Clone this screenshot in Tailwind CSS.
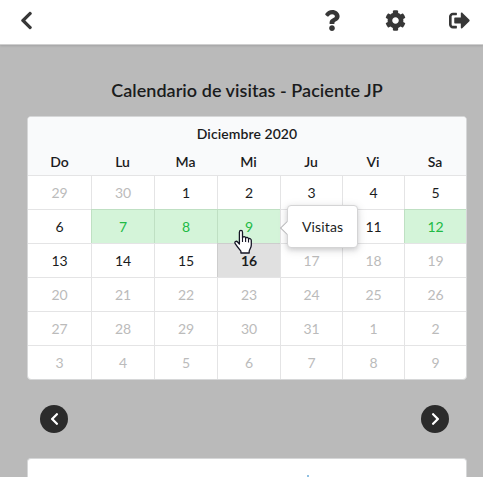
<!DOCTYPE html>
<html lang="es">
<head>
<meta charset="utf-8">
<title>Calendario de visitas</title>
<script src="https://cdn.jsdelivr.net/npm/@tailwindcss/browser@4"></script>
</head>
<body class="relative h-[477px] w-[483px] overflow-hidden bg-[#bababa] font-['Lato',sans-serif] text-[14px] text-[#1b1c1d]">
<header class="flex h-[45px] items-start justify-between border-b border-[#cfcfcf] bg-white pt-[9.5px] pr-[13px] pl-[20px] text-[#373737] shadow-[0_1px_2px_rgba(34,36,38,0.15)]">
  <svg class="h-[21px] w-[13px]" viewBox="0 0 320 512" fill="currentColor"><path d="M34.52 239.03L228.87 44.69c9.37-9.37 24.57-9.37 33.94 0l22.67 22.67c9.36 9.36 9.37 24.52.04 33.9L131.49 256l154.02 154.75c9.34 9.38 9.32 24.54-.04 33.9l-22.67 22.67c-9.37 9.37-24.57 9.37-33.94 0L34.52 272.97c-9.37-9.37-9.37-24.57 0-33.94z"/></svg>
  <div class="flex gap-[43px]">
    <svg class="mr-[2px] h-[21px] w-[16px]" viewBox="0 0 384 512" fill="currentColor"><path d="M202.021 0C122.202 0 70.503 32.703 29.914 91.026c-7.363 10.58-5.093 25.086 5.178 32.874l43.138 32.709c10.373 7.865 25.132 6.026 33.253-4.148 25.049-31.381 43.63-49.449 82.757-49.449 30.764 0 68.816 19.799 68.816 49.631 0 22.552-18.617 34.134-48.993 51.164-35.423 19.86-82.299 44.576-82.299 106.405V320c0 13.255 10.745 24 24 24h72.471c13.255 0 24-10.745 24-24v-5.773c0-42.86 125.268-44.645 125.268-160.627C377.504 66.256 286.902 0 202.021 0zM192 373.459c-38.196 0-69.271 31.075-69.271 69.271 0 38.195 31.075 69.27 69.271 69.27s69.271-31.075 69.271-69.271-31.075-69.27-69.271-69.27z"/></svg>
    <svg class="h-[21px] w-[21px]" viewBox="0 0 512 512" fill="currentColor"><path d="M487.4 315.7l-42.6-24.6c4.3-23.2 4.3-47 0-70.2l42.6-24.6c4.9-2.8 7.1-8.6 5.5-14-11.1-35.6-30-67.8-54.7-94.6-3.8-4.1-10-5.1-14.8-2.3L380.8 110c-17.9-15.4-38.5-27.3-60.8-35.1V25.8c0-5.6-3.9-10.5-9.4-11.7-36.7-8.2-74.3-7.8-109.2 0-5.5 1.2-9.4 6.1-9.4 11.7V75c-22.2 7.9-42.8 19.8-60.8 35.1L88.7 85.5c-4.9-2.8-11-1.9-14.8 2.3-24.7 26.7-43.6 58.9-54.7 94.6-1.7 5.4.6 11.2 5.5 14L67.3 221c-4.3 23.2-4.3 47 0 70.2l-42.6 24.6c-4.9 2.8-7.1 8.6-5.5 14 11.1 35.6 30 67.8 54.7 94.6 3.8 4.1 10 5.1 14.8 2.3l42.6-24.6c17.9 15.4 38.5 27.3 60.8 35.1v49.2c0 5.6 3.9 10.5 9.4 11.7 36.7 8.2 74.3 7.8 109.2 0 5.5-1.2 9.4-6.1 9.4-11.7v-49.2c22.2-7.9 42.8-19.8 60.8-35.1l42.6 24.6c4.9 2.8 11 1.9 14.8-2.3 24.7-26.7 43.6-58.9 54.7-94.6 1.5-5.5-.7-11.3-5.6-14.1zM256 336c-44.1 0-80-35.9-80-80s35.9-80 80-80 80 35.9 80 80-35.9 80-80 80z"/></svg>
    <svg class="h-[21px] w-[21px]" viewBox="0 0 512 512" fill="currentColor"><path d="M497 273L329 441c-15 15-41 4.5-41-17v-96H152c-13.3 0-24-10.7-24-24v-96c0-13.3 10.7-24 24-24h136V88c0-21.4 25.9-32 41-17l168 168c9.3 9.4 9.3 24.6 0 34zM192 436v-40c0-6.6-5.4-12-12-12H96c-17.7 0-32-14.3-32-32V160c0-17.7 14.3-32 32-32h84c6.6 0 12-5.4 12-12V76c0-6.6-5.4-12-12-12H96c-53 0-96 43-96 96v192c0 53 43 96 96 96h84c6.6 0 12-5.4 12-12z"/></svg>
  </div>
</header>
<main class="flex h-[432px] flex-col pt-[34px] pr-[16px] pl-[27px]">
  <h1 class="h-[37px] shrink-0 text-center text-[18px] leading-[23px] font-semibold tracking-[0.04px] whitespace-nowrap">Calendario de visitas - Paciente JP</h1>
  <section class="h-[264px] shrink-0 overflow-hidden rounded-[4px] border border-[#d6d7d8] bg-white">
    <div class="h-[58px] bg-[#f9fafb] text-center font-semibold">
      <div class="h-[31px] pt-[7px] leading-[20px] tracking-[0.005em]">Diciembre 2020</div>
      <div class="grid grid-cols-[63px_63px_63px_63px_62px_62px_62px] leading-[27px]"><span>Do</span><span>Lu</span><span>Ma</span><span>Mi</span><span>Ju</span><span>Vi</span><span>Sa</span></div>
    </div>
    <div id="days" class="grid auto-rows-[34px] grid-cols-[63px_63px_63px_63px_62px_62px_62px] text-center leading-[33px]"></div>
  </section>
  <nav class="flex h-[78px] shrink-0 items-center justify-between pr-[18px] pl-[13px]">
    <button class="flex size-[28px] items-center justify-center rounded-full bg-[#2b2b2b] text-white"><svg class="h-[14px] w-[9px]" viewBox="0 0 320 512" fill="currentColor"><path d="M34.52 239.03L228.87 44.69c9.37-9.37 24.57-9.37 33.94 0l22.67 22.67c9.36 9.36 9.37 24.52.04 33.9L131.49 256l154.02 154.75c9.34 9.38 9.32 24.54-.04 33.9l-22.67 22.67c-9.37 9.37-24.57 9.37-33.94 0L34.52 272.97c-9.37-9.37-9.37-24.57 0-33.94z"/></svg></button>
    <button class="flex size-[28px] items-center justify-center rounded-full bg-[#2b2b2b] text-white"><svg class="h-[14px] w-[9px] -scale-x-100" viewBox="0 0 320 512" fill="currentColor"><path d="M34.52 239.03L228.87 44.69c9.37-9.37 24.57-9.37 33.94 0l22.67 22.67c9.36 9.36 9.37 24.52.04 33.9L131.49 256l154.02 154.75c9.34 9.38 9.32 24.54-.04 33.9l-22.67 22.67c-9.37 9.37-24.57 9.37-33.94 0L34.52 272.97c-9.37-9.37-9.37-24.57 0-33.94z"/></svg></button>
  </nav>
  <section class="h-[19px] shrink-0 rounded-t-[4px] border border-b-0 border-[#d6d7d8] bg-white pt-[16px] pl-[279px]"><div class="size-[2px] bg-[#8fc0e2]"></div></section>
</main>
<div class="absolute top-[205px] left-[287px] h-[43px] w-[71px] rounded-[4px] border border-[#d4d4d5] bg-white pl-[14px] leading-[42px] tracking-[0.01em] shadow-[0_2px_4px_rgba(34,36,38,0.12),0_2px_10px_rgba(34,36,38,0.15)]">
  <i class="absolute top-[17px] left-[-6px] size-[10px] rotate-45 border-b border-l border-[#bababc] bg-white"></i>Visitas
</div>
<svg class="absolute top-[229px] left-[233px] h-[26px] w-[20px]" viewBox="0 0 20 26"><path d="M6.4 15V3.2C6.4 .8 9.5 .8 9.5 3.2V9C10 7.1 12.5 7.3 12.6 9.1C13.3 7.9 15.3 8.1 15.5 9.9C16.6 9.1 18.3 9.7 18.3 11.5V16C18.3 19 16.4 20.3 16.2 22.2V24H7.9V22.2C6.3 20.2 4.3 17.8 2.2 14.6C1 12.7 3.3 11.5 4.6 13Z" fill="#fff" stroke="#151525" stroke-width="1.3" stroke-linejoin="round"/><path d="M9.5 9V13M12.6 9V13M15.5 10V13.5" fill="none" stroke="#151525" stroke-width="1.1"/></svg>
<script>
// The 10th sits behind the popup, so its cell carries no label.
const days = [29,30,1,2,3,4,5,6,7,8,9,'',11,12,13,14,15,16,17,18,19,20,21,22,23,24,25,26,27,28,29,30,31,1,2,3,4,5,6,7,8,9];
const visits = [8, 9, 10, 13];
document.getElementById('days').innerHTML = days.map((d, i) => {
  let c = 'border-t ' + (i % 7 ? 'border-l ' : '');
  if (visits.includes(i)) c += 'border-[#bfe0c3] bg-[#d4f4d9] text-[#21ba45]';
  else if (i === 17) c += 'border-[#cdcdcd] bg-[#e0e0e0] font-bold';
  else c += 'border-[#e4e4e5] ' + (i < 2 || i > 17 ? 'text-[#bbbbbb]' : '');
  return `<div class="${c}">${d}</div>`;
}).join('');
</script>
</body>
</html>
